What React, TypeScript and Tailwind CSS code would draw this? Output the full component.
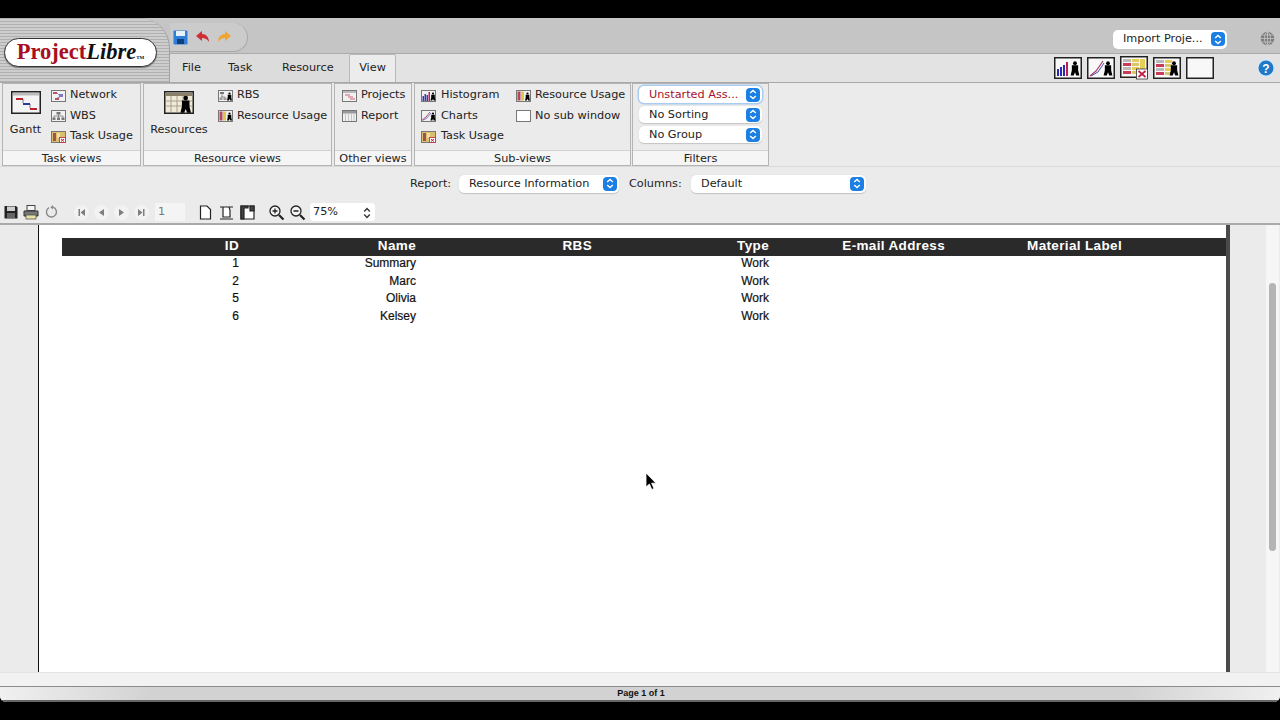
import type { ReactNode } from "react";

const Stepper = () => (
  <span className="w-[14px] h-[14px] rounded-[4px] bg-[#1b7fe3] flex items-center justify-center shrink-0">
    <svg width="8" height="11" viewBox="0 0 8 11" fill="none" stroke="#fff" strokeWidth="1.4">
      <path d="M1.2 4 L4 1.4 L6.8 4" />
      <path d="M1.2 7 L4 9.6 L6.8 7" />
    </svg>
  </span>
);

type SelectProps = { label: string; className: string; red?: boolean; focused?: boolean };

function Select({ label, className, red, focused }: SelectProps) {
  return (
    <div
      className={
        "h-[17px] rounded-[5px] bg-white flex items-center justify-between pl-[10px] pr-[2px] leading-none " +
        (focused ? "shadow-[0_0_0_1.5px_#a9cdf0] " : "shadow-[0_0.5px_1px_#c4c4c4] ") +
        className
      }
    >
      <span className={red ? "text-[#a5102a]" : "text-[#222]"}>{label}</span>
      <Stepper />
    </div>
  );
}

// tiny 14x12 thumbnails used in the ribbon
const Thumb = ({ children }: { children?: ReactNode }) => (
  <svg width="15" height="12" viewBox="0 0 15 12" className="shrink-0">
    <rect x="0.5" y="0.5" width="14" height="11" fill="#f1f1f1" stroke="#777" />
    {children}
  </svg>
);

const personPath = "M0.2 2.2 H3.8 V5 L4.5 8 H2.7 L2 6.2 L1.3 8 H-0.5 L0.2 5 Z";

const Person = ({ x, y, scale = 1 }: { x: number; y: number; scale?: number }) => (
  <g transform={`translate(${x} ${y}) scale(${scale})`} fill="#000">
    <circle cx="2" cy="1" r="1.1" />
    <path d={personPath} />
  </g>
);

const NetworkIcon = () => (
  <Thumb>
    <rect x="2" y="2" width="4" height="2" fill="#c05070" />
    <rect x="8" y="4" width="4" height="3" fill="#7a7ac8" />
    <rect x="4" y="8" width="4" height="2" fill="#c05070" />
    <path d="M6 3 L8 5 M6 8 L9 7" stroke="#555" strokeWidth="0.6" />
  </Thumb>
);
const WbsIcon = () => (
  <Thumb>
    <rect x="5.5" y="2" width="4" height="2.5" fill="#777" />
    <rect x="1.5" y="7.5" width="3" height="2.5" fill="#777" />
    <rect x="6" y="7.5" width="3" height="2.5" fill="#777" />
    <rect x="10.5" y="7.5" width="3" height="2.5" fill="#777" />
    <path d="M7.5 4.5 V7.5 M3 7.5 V6 H12 V7.5" stroke="#555" strokeWidth="0.6" fill="none" />
  </Thumb>
);
const TaskUsageIcon = () => (
  <Thumb>
    <rect x="1" y="1" width="13" height="10" fill="#d9c070" />
    <rect x="2" y="2" width="3" height="8" fill="#a85050" />
    <rect x="6" y="2" width="3" height="5" fill="#f0e0a0" />
    <rect x="8.5" y="6.5" width="6" height="5" fill="#fff" stroke="#c02040" strokeWidth="0.8" />
    <path d="M10 8 L13 10.5 M13 8 L10 10.5" stroke="#c02040" />
  </Thumb>
);
const RbsIcon = () => (
  <Thumb>
    <rect x="2" y="2" width="4" height="2" fill="#777" />
    <rect x="1.5" y="7.5" width="3" height="2.5" fill="#999" />
    <rect x="5.5" y="7.5" width="3" height="2.5" fill="#999" />
    <path d="M4 4 V7 M3 7 H7" stroke="#555" strokeWidth="0.6" />
    <Person x={9.5} y={2.5} />
  </Thumb>
);
const ResourceUsageIcon = () => (
  <Thumb>
    <rect x="1.5" y="1.5" width="3" height="9" fill="#b04a5a" />
    <rect x="5" y="1.5" width="3" height="9" fill="#e2c64c" />
    <Person x={9.5} y={2.5} />
  </Thumb>
);
const ProjectsIcon = () => (
  <Thumb>
    <rect x="1" y="1" width="13" height="2" fill="#b9b9b9" />
    <path d="M3 5 H8 M6 7 H11 M8 9 H13" stroke="#d06070" strokeWidth="1" />
  </Thumb>
);
const ReportIcon = () => (
  <Thumb>
    <rect x="1" y="1" width="13" height="2.5" fill="#9a9a9a" />
    <path d="M3.5 3 V11 M6.5 3 V11 M9.5 3 V11 M12 3 V11" stroke="#bbb" strokeWidth="0.8" />
  </Thumb>
);
const HistogramIcon = () => (
  <Thumb>
    <rect x="1.5" y="6" width="1.5" height="5" fill="#3a3ab0" />
    <rect x="3.5" y="4" width="1.5" height="7" fill="#3a3ab0" />
    <rect x="5.5" y="5" width="1.5" height="6" fill="#3a3ab0" />
    <rect x="7.5" y="2" width="1.5" height="9" fill="#c02050" />
    <Person x={10} y={2.5} />
  </Thumb>
);
const ChartsIcon = () => (
  <Thumb>
    <path d="M1 10 L5 7 L9 2" stroke="#b0406a" strokeWidth="0.9" fill="none" />
    <path d="M1.5 10.5 L6 8 L10 3" stroke="#5050b0" strokeWidth="0.7" fill="none" />
    <Person x={10} y={2.5} />
  </Thumb>
);
const BlankIcon = () => (
  <svg width="15" height="12" viewBox="0 0 15 12" className="shrink-0">
    <rect x="0.5" y="0.5" width="14" height="11" fill="#fff" stroke="#777" />
  </svg>
);

const GanttBig = () => (
  <svg width="30" height="23" viewBox="0 0 30 23">
    <rect x="0.75" y="0.75" width="28.5" height="21.5" fill="#f4f4f4" stroke="#222" strokeWidth="1.5" />
    <rect x="2" y="2" width="26" height="2.5" fill="#bcbcbc" />
    <path d="M5 8 H12" stroke="#c01f2c" strokeWidth="2" />
    <path d="M12 13 H19" stroke="#2a3aa0" strokeWidth="2" />
    <path d="M19 18 H26" stroke="#c01f2c" strokeWidth="2" />
    <path d="M12 8 V12 M19 13 V17" stroke="#444" strokeWidth="0.7" />
  </svg>
);
const ResourcesBig = () => (
  <svg width="30" height="23" viewBox="0 0 30 23">
    <rect x="0.75" y="0.75" width="28.5" height="21.5" fill="#efe9d8" stroke="#222" strokeWidth="1.5" />
    <rect x="2" y="2" width="26" height="3" fill="#8c7f6a" />
    <path d="M7 5 V21 M13 5 V21 M19 5 V21 M2 10 H28 M2 15 H28" stroke="#9c8f78" strokeWidth="0.8" />
    <Person x={17.5} y={5} scale={2.1} />
  </svg>
);

const RibbonItem = ({ icon, label }: { icon: ReactNode; label: string }) => (
  <div className="h-[20.5px] flex items-center gap-[4px] whitespace-nowrap">
    {icon}
    <span>{label}</span>
  </div>
);

type GroupProps = { title: string; className: string; bodyClass?: string; children: ReactNode };

function Group({ title, className, bodyClass, children }: GroupProps) {
  return (
    <section className={"h-[83px] border border-[#b4b4b4] flex flex-col shrink-0 " + className}>
      <div className={"h-[66px] flex " + (bodyClass ?? "")}>{children}</div>
      <div className="h-[15px] pt-[1px] bg-[#f5f5f5] border-t border-[#d2d2d2] flex items-center justify-center leading-none">
        {title}
      </div>
    </section>
  );
}

const BigButton = ({ icon, label, className }: { icon: ReactNode; label: string; className: string }) => (
  <div className={"flex flex-col items-center pt-[7px] gap-[10px] shrink-0 " + className}>
    {icon}
    <span className="leading-none">{label}</span>
  </div>
);

const BarIcon = ({ children, className }: { children?: ReactNode; className?: string }) => (
  <svg width="28" height="22" viewBox="0 0 28 22" className={"shrink-0 overflow-visible " + (className ?? "")}>
    <rect x="0.75" y="0.75" width="26.5" height="20.5" fill="#f8f8f8" stroke="#222" strokeWidth="1.5" />
    {children}
  </svg>
);

// the red/yellow usage table drawn in two of the toolbar thumbnails
const UsageGrid = () => (
  <g>
    {[3, 7, 11, 15].map((y) => (
      <g key={y}>
        <rect x="3" y={y} width="8" height="3" fill={y === 7 || y === 15 ? "#c73a58" : "#b9b9b9"} />
        <rect x="12" y={y} width="7" height="3" fill={y === 3 || y === 11 ? "#e8cc58" : "#d8c56c"} />
      </g>
    ))}
  </g>
);

const Logo = () => (
  <div className="w-[153px] h-[29px] rounded-full bg-white border border-[#333] shadow-[0_1px_1px_#777] flex items-center justify-center">
    <span className="font-['Liberation_Serif',serif] font-bold text-[22.5px] leading-none text-[#a80f22] whitespace-nowrap">
      Project<span className="italic text-[#111]">Libre</span>
      <span className="text-[5px] text-[#111] not-italic">TM</span>
    </span>
  </div>
);

const NavButton = ({ d }: { d: string }) => (
  <span className="w-[15px] h-[15px] rounded-full bg-[#f2f2f2] flex items-center justify-center">
    <svg width="9" height="9" viewBox="0 0 9 9" fill="#7e7e7e">
      <path d={d} />
    </svg>
  </span>
);

const PageIcon = ({ children }: { children?: ReactNode }) => (
  <svg width="15" height="15" viewBox="0 0 15 15" fill="#fff" stroke="#222" strokeWidth="1.2" className="shrink-0">
    {children}
  </svg>
);

const ZoomIcon = ({ plus }: { plus?: boolean }) => (
  <svg width="17" height="17" viewBox="0 0 17 17" fill="none" stroke="#222" className="shrink-0">
    <circle cx="7" cy="7" r="5" fill="#f4f4f4" strokeWidth="1.3" />
    <path d="M11 11 L15.5 15.5" strokeWidth="2.2" />
    <path d={plus ? "M4.5 7 H9.5 M7 4.5 V9.5" : "M4.5 7 H9.5"} strokeWidth="1.3" />
  </svg>
);

const columns = ["ID", "Name", "RBS", "Type", "E-mail Address", "Material Label"];
const rows = [
  ["1", "Summary", "", "Work", "", ""],
  ["2", "Marc", "", "Work", "", ""],
  ["5", "Olivia", "", "Work", "", ""],
  ["6", "Kelsey", "", "Work", "", ""],
];
const gridCols = "grid grid-cols-[177px_177px_176px_177px_176px_177px]";

export default function App() {
  return (
    <div className="relative w-[1280px] h-[720px] overflow-hidden bg-black pt-[18px] font-['DejaVu_Sans',sans-serif] text-[11.25px] text-[#222]">
      <div className="h-[684px] flex flex-col bg-[#ebebeb] rounded-b-[6px] overflow-hidden">
        {/* title area */}
        <header className="h-[64px] flex bg-[#c5c5c5] shrink-0">
          <div className="w-[170px] h-[64px] pt-[20px] pl-[4px] rounded-tr-[30px] border-r border-[#a2a2a2] bg-[repeating-linear-gradient(180deg,#b0b0b0_0px,#b0b0b0_1px,#cdcdcd_1px,#cdcdcd_3px)] shrink-0">
            <Logo />
          </div>
          <div className="flex-1 flex flex-col">
            <div className="h-[35px] flex items-center pt-[5px]">
              <div className="w-[78px] h-[29px] mt-[-1px] flex items-center gap-[7px] pl-[3px] bg-[#cbcbcb] border-r border-b border-[#a8a8a8] rounded-r-[16px]">
                <svg width="15" height="15" viewBox="0 0 15 15">
                  <rect x="0.5" y="0.5" width="14" height="14" rx="1" fill="#2f7fd8" />
                  <rect x="3" y="1" width="9" height="5" fill="#e8f2ff" />
                  <rect x="4" y="9" width="7" height="5" fill="#10407c" />
                </svg>
                <svg width="15" height="14" viewBox="0 0 15 14">
                  <path d="M1 6 L7 1 V4 C11 4 14 7 14 12 C12 9 10 8 7 8 V11 Z" fill="#cf2f35" />
                </svg>
                <svg width="15" height="14" viewBox="0 0 15 14">
                  <path d="M14 6 L8 1 V4 C4 4 1 7 1 12 C3 9 5 8 8 8 V11 Z" fill="#eda534" />
                </svg>
              </div>
              <div className="flex-1" />
              <Select label="Import Proje..." className="w-[114px] mr-[33px] mt-[2px] !h-[19px]" />
              <svg width="15" height="15" viewBox="0 0 15 15" fill="none" strokeWidth="0.8" className="mr-[5px]">
                <circle cx="7.5" cy="7.5" r="6.8" fill="#7c7c7c" />
                <path d="M1 7.5 H14 M7.5 1 V14 M2.2 4 H12.8 M2.2 11 H12.8" stroke="#c8c8c8" />
                <ellipse cx="7.5" cy="7.5" rx="3" ry="6.5" stroke="#c8c8c8" />
              </svg>
            </div>
            <div className="h-[29px] flex items-center bg-[#e3e3e3] border-t border-[#ababab]">
              <nav className="h-full flex items-center pl-[12px] bg-[#dcdcdc]">
                <span className="w-[20px]">File</span>
                <span className="ml-[26px] w-[26px]">Task</span>
                <span className="ml-[28px] w-[51px]">Resource</span>
                <span className="ml-[16px] w-[47px] h-full flex items-center justify-center bg-[#ececec] border-x border-t border-[#b8b8b8] mt-[-1px] rounded-t-[2px]">
                  View
                </span>
              </nav>
              <div className="flex-1" />
              <div className="flex items-center gap-[5px] mr-[42px]">
                <BarIcon>
                  <rect x="3" y="12" width="2" height="7" fill="#2a2ab0" />
                  <rect x="6" y="10" width="2" height="9" fill="#2a2ab0" />
                  <rect x="9" y="8" width="2" height="11" fill="#2a2ab0" />
                  <rect x="12" y="5" width="2" height="14" fill="#c02050" />
                  <Person x={17.5} y={4.5} scale={1.75} />
                </BarIcon>
                <BarIcon>
                  <path d="M3 19 L9 14 L16 4" stroke="#b0406a" strokeWidth="1.2" fill="none" />
                  <path d="M4 19 L11 15 L17 6" stroke="#5050b0" strokeWidth="1" fill="none" />
                  <Person x={17.5} y={4.5} scale={1.75} />
                </BarIcon>
                <BarIcon className="mt-[-3px]">
                  <UsageGrid />
                  <rect x="20" y="3" width="5" height="11" fill="#e8cc58" />
                  <rect x="16.5" y="13" width="11" height="10" fill="#fff" stroke="#333" strokeWidth="0.8" />
                  <path d="M18.5 15 L25.5 21 M25.5 15 L18.5 21" stroke="#c01f45" strokeWidth="1.8" />
                </BarIcon>
                <BarIcon>
                  <UsageGrid />
                  <Person x={17.5} y={4.5} scale={1.75} />
                </BarIcon>
                <BarIcon />
              </div>
              <svg width="20" height="20" viewBox="0 0 20 20" className="mr-[4px]">
                <circle cx="10" cy="10" r="9.5" fill="#d6e6f4" />
                <circle cx="10" cy="10" r="7.5" fill="#1f78c8" />
                <text x="10" y="14.5" textAnchor="middle" fontSize="12" fontWeight="700" fill="#fff" fontFamily="Liberation Sans, sans-serif">?</text>
              </svg>
            </div>
          </div>
        </header>

        {/* ribbon */}
        <div className="h-[84px] flex gap-[2px] pl-[2px] shrink-0 border-t border-[#a8a8a8]">
          <Group title="Task views" className="w-[139px]">
            <BigButton icon={<GanttBig />} label="Gantt" className="w-[45px]" />
            <div className="ml-[3px] pt-[1.5px]">
              <RibbonItem icon={<NetworkIcon />} label="Network" />
              <RibbonItem icon={<WbsIcon />} label="WBS" />
              <RibbonItem icon={<TaskUsageIcon />} label="Task Usage" />
            </div>
          </Group>
          <Group title="Resource views" className="w-[189px]">
            <BigButton icon={<ResourcesBig />} label="Resources" className="w-[70px]" />
            <div className="ml-[4px] pt-[1.5px]">
              <RibbonItem icon={<RbsIcon />} label="RBS" />
              <RibbonItem icon={<ResourceUsageIcon />} label="Resource Usage" />
            </div>
          </Group>
          <Group title="Other views" className="w-[78px]">
            <div className="ml-[7px] pt-[1.5px]">
              <RibbonItem icon={<ProjectsIcon />} label="Projects" />
              <RibbonItem icon={<ReportIcon />} label="Report" />
            </div>
          </Group>
          <Group title="Sub-views" className="w-[217px]">
            <div className="ml-[6px] w-[95px] pt-[1.5px] [&_span]:ml-[1px]">
              <RibbonItem icon={<HistogramIcon />} label="Histogram" />
              <RibbonItem icon={<ChartsIcon />} label="Charts" />
              <RibbonItem icon={<TaskUsageIcon />} label="Task Usage" />
            </div>
            <div className="pt-[1.5px]">
              <RibbonItem icon={<ResourceUsageIcon />} label="Resource Usage" />
              <RibbonItem icon={<BlankIcon />} label="No sub window" />
            </div>
          </Group>
          <Group title="Filters" className="w-[137px] ml-[-1px]" bodyClass="flex-col gap-[3px] pl-[6px] pt-[2px]">
            <Select label="Unstarted Ass..." className="w-[123px]" red focused />
            <Select label="No Sorting" className="w-[123px]" />
            <Select label="No Group" className="w-[123px]" />
          </Group>
        </div>

        {/* report selector */}
        <div className="h-[34px] flex items-center pl-[410px] shrink-0 border-t border-[#d8d8d8]">
          <span className="w-[40px] pt-[1px]">Report:</span>
          <Select label="Resource Information" className="w-[160px] ml-[9px] !h-[18px]" />
          <span className="ml-[10px] w-[52px] pt-[1px]">Columns:</span>
          <Select label="Default" className="w-[175px] ml-[10px] !h-[18px]" />
        </div>

        {/* print preview toolbar */}
        <div className="h-[25px] flex items-center pl-[4px] pt-[1px] shrink-0 border-b-2 border-[#a9a9a9]">
          <svg width="14" height="14" viewBox="0 0 14 14">
            <path d="M0.5 1 H12 L13.5 2.5 V13.5 H0.5 Z" fill="#222" />
            <rect x="3" y="1.5" width="8" height="4.5" fill="#cfcfcf" />
            <rect x="3" y="8" width="8" height="5" fill="#666" />
          </svg>
          <svg width="16" height="15" viewBox="0 0 16 15" className="ml-[5px]">
            <rect x="4" y="0.5" width="8" height="5" fill="#f5f5f5" stroke="#444" />
            <path d="M1 6 H15 V11 H1 Z" fill="#777" stroke="#333" />
            <rect x="3" y="10" width="10" height="4" fill="#e8e0a0" stroke="#444" strokeWidth="0.7" />
          </svg>
          <svg width="14" height="14" viewBox="0 0 14 14" fill="none" stroke="#8a8a8a" strokeWidth="1.4" className="ml-[6px]">
            <path d="M4 2.6 A5 5 0 1 0 8 2.2" />
            <path d="M8 0 V4.4 L5.4 2.2 Z" fill="#8a8a8a" stroke="none" />
          </svg>
          <div className="ml-[15px] flex items-center gap-[5px]">
            <NavButton d="M1.5 1 H3 V8 H1.5 Z M8 1 V8 L3.5 4.5 Z" />
            <NavButton d="M7 1 V8 L2 4.5 Z" />
            <NavButton d="M2 1 V8 L7 4.5 Z" />
            <NavButton d="M1 1 V8 L5.5 4.5 Z M6 1 H7.5 V8 H6 Z" />
          </div>
          <div className="ml-[6px] w-[30px] h-[18px] bg-[#f4f4f4] flex items-center pl-[3px] pt-[1px] text-[#777]">1</div>
          <div className="ml-[13px] flex items-center gap-[6px]">
            <PageIcon><path d="M2.5 1 H9 L12.5 4.5 V14 H2.5 Z" /></PageIcon>
            <PageIcon><path d="M1 2 H14 M1 14 H14 M4 2 H10 L11 5 V12 H4 Z" /></PageIcon>
            <PageIcon><path d="M1 1 H14 V14 H1 Z" /><path d="M1 1 H8 V3 H4 V14 H1 Z M10 1 H14 V6 H10 Z" fill="#444" /></PageIcon>
          </div>
          <div className="ml-[13px] flex items-center gap-[4px]">
            <ZoomIcon plus />
            <ZoomIcon />
          </div>
          <div className="ml-[4px] w-[65px] h-[18px] bg-white rounded-[4px] flex items-center justify-between pl-[3px] pt-[1px] pr-[4px]">
            <span>75%</span>
            <svg width="8" height="12" viewBox="0 0 8 12" fill="none" stroke="#333" strokeWidth="1.4">
              <path d="M1.2 4.4 L4 1.6 L6.8 4.4" />
              <path d="M1.2 7.6 L4 10.4 L6.8 7.6" />
            </svg>
          </div>
        </div>

        {/* page preview */}
        <main className="flex-1 min-h-0 flex">
          <div className="w-[38px] shrink-0" />
          <div className="w-[1192px] bg-white border-l border-l-[#111] border-r-[4px] border-r-[#4a4a4a] pl-[23px] pt-[13px] font-['Liberation_Sans',sans-serif]">
            <div className={gridCols + " h-[18px] w-[1164px] pb-[2px] bg-[#2a2a2a] items-center text-white text-[13.5px] leading-none font-bold tracking-[0.35px]"}>
              {columns.map((c) => (
                <span key={c} className="text-right">{c}</span>
              ))}
            </div>
            {rows.map((row) => (
              <div key={row[0]} className={gridCols + " h-[17.5px] pb-[2px] items-center text-[12px] leading-[13px] text-[#111] [-webkit-text-stroke:0.2px_#111]"}>
                {row.map((cell, i) => (
                  <span key={i} className="text-right">{cell}</span>
                ))}
              </div>
            ))}
          </div>
          <div className="flex-1 flex justify-end pr-[1px]">
            <div className="w-[13px] bg-[#f6f6f6] flex justify-center pt-[58px]">
              <div className="w-[7px] h-[268px] rounded-full bg-[#b4b4b4]" />
            </div>
          </div>
        </main>

        <div className="h-[15px] bg-[#f2f2f2] border-t border-[#e4e4e4] border-b border-b-[#8c8c8c] shrink-0" />
        <footer className="h-[15px] pl-[2px] shrink-0 flex items-center justify-center border-b-2 border-[#666] bg-[linear-gradient(90deg,#f0f0f0_0%,#d2d2d2_12%,#d2d2d2_88%,#f0f0f0_100%)] font-['Liberation_Sans',sans-serif] font-bold text-[9px] text-[#111]">
          Page 1 of 1
        </footer>
      </div>

      {/* mouse pointer */}
      <svg width="13" height="19" viewBox="0 0 13 19" className="absolute left-[645px] top-[472px]">
        <path d="M1 1 V15 L4.4 12 L6.8 17.5 L9 16.5 L6.6 11.2 H11 Z" fill="#000" stroke="#fff" strokeWidth="0.8" />
      </svg>
    </div>
  );
}
